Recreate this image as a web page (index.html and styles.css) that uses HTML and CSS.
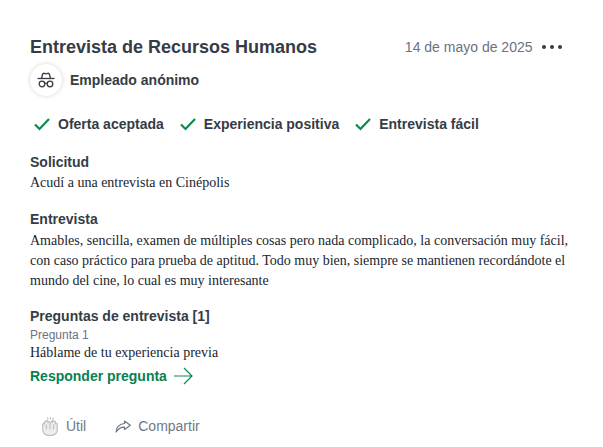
FILE: index.html
```html
<!DOCTYPE html>
<html lang="es">
<head>
    <meta charset="UTF-8">
    <meta name="viewport" content="width=device-width, initial-scale=1.0">
    <title>Entrevista de Recursos Humanos</title>
    <link rel="stylesheet" href="styles.css">
</head>
<body>
    <div class="review">
        <div class="review-header">
            <h1>Entrevista de Recursos Humanos</h1>
            <div class="review-meta">
                <span class="date">14 de mayo de 2025</span>
                <span class="dots"><i></i><i></i><i></i></span>
            </div>
        </div>

        <div class="author">
            <div class="avatar">
                <svg width="18" height="16" viewBox="0 0 18 16" fill="none" stroke="#353c45" stroke-width="1.3">
                    <path d="M.5 6.500h17"/>
                    <path d="M4.500 6.500l1-4q.4-1.500 1.800-1.200L9 1.800l1.700-.5q1.400-.3 1.800 1.200l1 4"/>
                    <circle cx="5" cy="12" r="2.800"/>
                    <circle cx="13" cy="12" r="2.800"/>
                    <path d="M7.800 11.500q1.200-.8 2.400 0"/>
                </svg>
            </div>
            <span>Empleado anónimo</span>
        </div>

        <div class="tags">
            <div class="tag">
                <svg class="check" width="16" height="13" viewBox="0 0 16 13"><path d="M1 6.500l4.500 4.500L15 1"/></svg>
                <span>Oferta aceptada</span>
            </div>
            <div class="tag">
                <svg class="check" width="16" height="13" viewBox="0 0 16 13"><path d="M1 6.500l4.500 4.500L15 1"/></svg>
                <span>Experiencia positiva</span>
            </div>
            <div class="tag">
                <svg class="check" width="16" height="13" viewBox="0 0 16 13"><path d="M1 6.500l4.500 4.500L15 1"/></svg>
                <span>Entrevista fácil</span>
            </div>
        </div>

        <div class="section">
            <h2>Solicitud</h2>
            <p>Acudí a una entrevista en Cinépolis</p>
        </div>

        <div class="section">
            <h2>Entrevista</h2>
            <p>Amables, sencilla, examen de múltiples cosas pero nada complicado, la conversación muy fácil, con caso práctico para prueba de aptitud. Todo muy bien, siempre se mantienen recordándote el mundo del cine, lo cual es muy interesante</p>
        </div>

        <div class="questions">
            <h2>Preguntas de entrevista [1]</h2>
            <div class="question-label">Pregunta 1</div>
            <p>Háblame de tu experiencia previa</p>
            <a class="answer" href="#">
                <span>Responder pregunta</span>
                <svg width="19" height="18" viewBox="0 0 19 18" fill="none" stroke="#0a8a50" stroke-width="1.2"><path d="M0 9h18M10 1l8 8-8 8"/></svg>
            </a>
        </div>

        <div class="actions">
            <div class="action">
                <svg width="16" height="19" viewBox="0 0 18 20" preserveAspectRatio="none" fill="#eceded" stroke="#bcbfc4" stroke-width="1.3">
                    <path d="M.8 13V8q0-1.200 1-1.200T2.800 8V5.500q0-1 1-1t1 1V4.500q0-1 1-1t1 1v1q1.200-.8 2.200 0 1-.8 2.200 0v-1q0-1 1-1t1 1v1q0-1 1-1t1 1V8q0-1.200 1-1.200t1 1.200v5q0 6.500-8.200 6.500T.8 13z"/>
                    <path d="M9 6v7M5 8v5M13 8v5"/>
                    <path d="M6 .5l1 2M9.500 0v2.500M13 .8l-1.200 1.800" fill="none"/>
                </svg>
                <span>Útil</span>
            </div>
            <div class="action">
                <svg width="16" height="13" viewBox="0 0 16 13" fill="none" stroke="#6f7985" stroke-width="1.2" stroke-linejoin="round">
                    <path d="M9.500 1l5.800 4.300-5.800 4.200V7.200C6.500 7 3.500 8.500 1.200 12 1 7.500 4.500 3.800 9.500 3.500z"/>
                </svg>
                <span>Compartir</span>
            </div>
        </div>
    </div>
</body>
</html>
```

FILE: styles.css
```css
body {
    margin: 0;
    background-color: #fff;
    color: #20262e;
    font-family: "Liberation Serif", serif;
}
h1, h2, p {
    margin: 0;
}
.review {
    padding: 36px 22px 0 30px;
}
.review-header {
    display: flex;
    justify-content: space-between;
    align-items: center;
    height: 22px;
    padding-right: 19px;
}
h1 {
    font: bold 18px/22px "Liberation Sans", sans-serif;
    color: #353c45;
}
.review-meta {
    display: flex;
    align-items: center;
}
.date {
    font: 14px/22px "Liberation Sans", sans-serif;
    color: #6b7280;
}
.dots {
    display: flex;
    gap: 3.500px;
    margin-left: 9px;
}
.dots i {
    width: 4.500px;
    height: 4.500px;
    border-radius: 50%;
    background-color: #353c45;
}
.author {
    display: flex;
    align-items: center;
    gap: 8px;
    margin-top: 6px;
    font: bold 14px/18px "Liberation Sans", sans-serif;
    color: #353c45;
}
.avatar {
    display: flex;
    justify-content: center;
    align-items: center;
    width: 32px;
    height: 32px;
    border-radius: 50%;
    background-color: #fff;
    box-shadow: 0 0 4px rgba(0, 0, 0, 0.18);
}
.tags {
    display: flex;
    gap: 16px;
    margin-top: 19px;
    padding-left: 4px;
}
.tag {
    display: flex;
    align-items: center;
    gap: 8px;
    font: bold 14px/18px "Liberation Sans", sans-serif;
    color: #353c45;
}
.check {
    fill: none;
    stroke: #0a8a50;
    stroke-width: 2.200;
}
.section {
    margin-top: 20px;
}
.section p {
    margin-top: 2px;
}
.section + .section {
    margin-top: 17px;
}
.section + .section p {
    margin-top: 3px;
}
h2 {
    font: bold 14px/18px "Liberation Sans", sans-serif;
    color: #353c45;
}
p {
    font-size: 14px;
    line-height: 20px;
    color: #20262e;
}
.questions {
    margin-top: 16px;
}
.question-label {
    font: 12px/16px "Liberation Sans", sans-serif;
    color: #6b7280;
    margin-top: 2px;
}
.questions p {
    line-height: 18px;
    margin-top: 1px;
}
.answer {
    display: flex;
    align-items: center;
    gap: 7px;
    margin-top: 5px;
    font: bold 14px/18px "Liberation Sans", sans-serif;
    color: #0a7f50;
    text-decoration: none;
}
.actions {
    display: flex;
    gap: 29px;
    margin-top: 31px;
    padding-left: 12px;
}
.action {
    display: flex;
    align-items: center;
    gap: 8px;
    font: 14px/20px "Liberation Sans", sans-serif;
    color: #6f7985;
}
.action + .action {
    gap: 7px;
}
```
